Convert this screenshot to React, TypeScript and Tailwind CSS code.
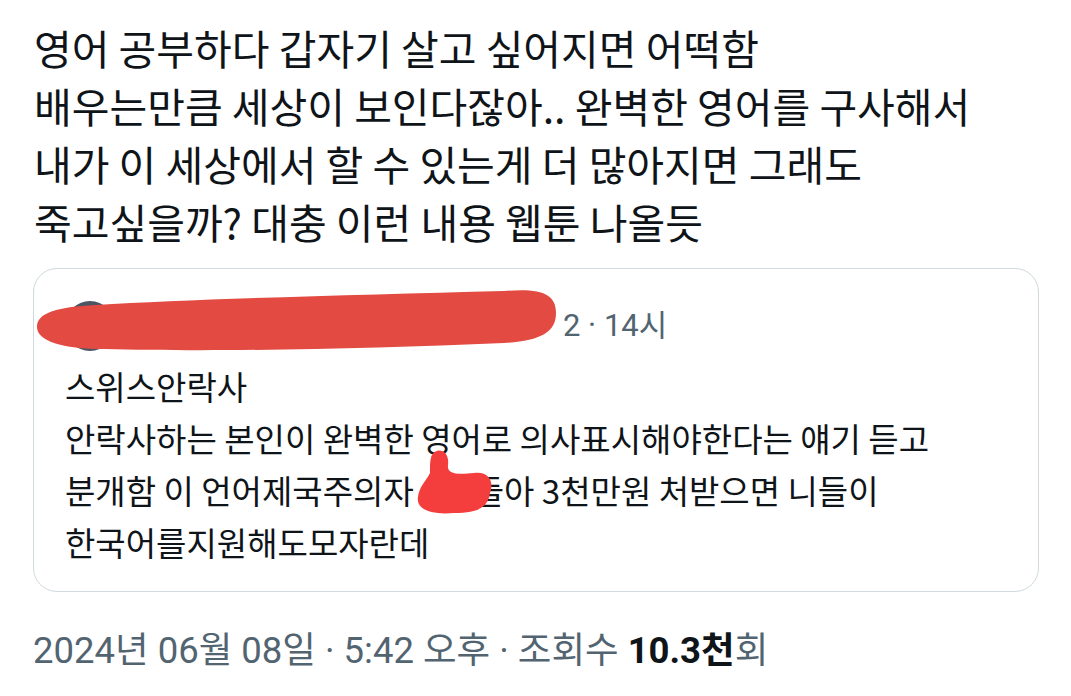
import React from 'react';

const tweetLines = [
  '영어 공부하다 갑자기 살고 싶어지면 어떡함',
  '배우는만큼 세상이 보인다잖아.. 완벽한 영어를 구사해서',
  '내가 이 세상에서 할 수 있는게 더 많아지면 그래도',
  '죽고싶을까? 대충 이런 내용 웹툰 나올듯',
];

const kr = { fontFamily: "'Noto Sans CJK KR', sans-serif" };
const meta = { fontFamily: "Roboto, 'Noto Sans CJK KR', sans-serif" };

function Scribbles() {
  // red marker redactions drawn over the quoted tweet
  return (
    <svg
      className="absolute left-0 top-0 pointer-events-none"
      width="1006"
      height="324"
      viewBox="0 0 1006 324"
    >
      <path
        d="M 3 58 C 3 44, 22 38, 62 36 C 160 30, 320 26, 470 22 C 506 19, 522 24, 522 44 C 522 64, 505 72, 470 74 C 330 80, 180 83, 70 80 C 28 80, 3 72, 3 58 Z"
        fill="#e24a42"
      />
      <path
        d="M 398 186 C 402 178, 416 180, 414 196 C 413 204, 420 206, 440 204 C 456 202, 460 214, 456 224 C 454 236, 448 244, 420 244 C 396 246, 382 240, 384 228 C 385 218, 392 212, 396 204 C 396 196, 396 190, 398 186 Z"
        fill="#f43e3e"
      />
    </svg>
  );
}

export default function App() {
  return (
    <div className="w-[1071px] h-[696px] bg-white overflow-hidden">
      {/* Tweet text */}
      <div className="pl-[34px] pt-[18px] text-[41px] leading-[58px] text-[#0f1419]" style={kr}>
        {tweetLines.map((line, i) => (
          <div key={i} className="whitespace-nowrap">{line}</div>
        ))}
      </div>

      {/* Quoted tweet */}
      <div className="relative ml-[33px] mt-[18px] w-[1006px] h-[324px] border border-[#cfd9de] rounded-[24px]">
        <div className="flex items-center h-[56px] mt-[29px] pl-[31px]">
          <div className="w-[50px] h-[50px] rounded-full bg-[#4b5563]" />
          <div className="w-[448px]" />
          <span className="text-[31px] text-[#536471] whitespace-nowrap" style={meta}>
            2 · 14시
          </span>
        </div>
        <div className="mt-[6px] pl-[31px] text-[33px] leading-[52px] text-[#0f1419]" style={kr}>
          <div>스위스안락사</div>
          <div className="whitespace-nowrap">안락사하는 본인이 완벽한 영어로 의사표시해야한다는 얘기 듣고</div>
          <div className="whitespace-nowrap">
            분개함 이 언어제국주의자<span className="inline-block w-[60px]" />들아 3천만원 처받으면 니들이
          </div>
          <div>한국어를지원해도모자란데</div>
        </div>
        <Scribbles />
      </div>

      {/* Timestamp / views */}
      <div className="ml-[33px] mt-[34px] text-[36.5px] leading-[50px] text-[#536471] whitespace-nowrap" style={meta}>
        2024년 06월 08일 · 5:42 오후 · 조회수 <span className="font-bold text-[#0f1419]">10.3천</span>회
      </div>
    </div>
  );
}
